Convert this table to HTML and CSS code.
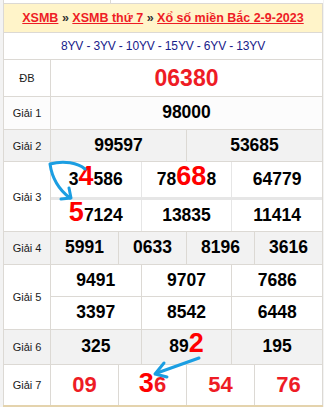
FILE: index.html
```html
<!DOCTYPE html>
<html>
<head>
<meta charset="utf-8">
<link rel="stylesheet" href="styles.css">
</head>
<body>
<div class="page">
  <div class="prev"><span class="prev-line"></span></div>
  <div class="board">
    <div class="head"><span class="head-text"><a class="lnk">XSMB</a> <span class="sep">»</span> <a class="lnk">XSMB thứ 7</a> <span class="sep">»</span> <a class="lnk">Xổ số miền Bắc 2-9-2023</a></span></div>
    <div class="codes">8YV - 3YV - 10YV - 15YV - 6YV - 13YV</div>

    <div class="prize white">
      <div class="label">ĐB</div>
      <div class="data"><div class="line h36 c1"><div class="cell db"><span class="n">06380</span></div></div></div>
    </div>

    <div class="prize light">
      <div class="label">Giải 1</div>
      <div class="data"><div class="line h32 c1"><div class="cell"><span class="n">98000</span></div></div></div>
    </div>

    <div class="prize grey">
      <div class="label">Giải 2</div>
      <div class="data"><div class="line h31 c2"><div class="cell"><span class="n">99597</span></div><div class="cell"><span class="n">53685</span></div></div></div>
    </div>

    <div class="prize white">
      <div class="label">Giải 3</div>
      <div class="data thick">
        <div class="line h35 c3"><div class="cell"><span class="n">3<span class="big">4</span>586</span></div><div class="cell"><span class="n">78<span class="big">68</span>8</span></div><div class="cell"><span class="n">64779</span></div></div>
        <div class="line h31 c3"><div class="cell"><span class="n"><span class="big">5</span>7124</span></div><div class="cell"><span class="n">13835</span></div><div class="cell"><span class="n">11414</span></div></div>
      </div>
    </div>

    <div class="prize grey">
      <div class="label">Giải 4</div>
      <div class="data"><div class="line h32 c4"><div class="cell"><span class="n">5991</span></div><div class="cell"><span class="n">0633</span></div><div class="cell"><span class="n">8196</span></div><div class="cell"><span class="n">3616</span></div></div></div>
    </div>

    <div class="prize white">
      <div class="label">Giải 5</div>
      <div class="data">
        <div class="line h31 c3"><div class="cell"><span class="n">9491</span></div><div class="cell"><span class="n">9707</span></div><div class="cell"><span class="n">7686</span></div></div>
        <div class="line h32 c3"><div class="cell"><span class="n">3397</span></div><div class="cell"><span class="n">8542</span></div><div class="cell"><span class="n">6448</span></div></div>
      </div>
    </div>

    <div class="prize grey">
      <div class="label">Giải 6</div>
      <div class="data"><div class="line h34 c3"><div class="cell"><span class="n">325</span></div><div class="cell"><span class="n">89<span class="big">2</span></span></div><div class="cell"><span class="n">195</span></div></div></div>
    </div>

    <div class="prize white">
      <div class="label">Giải 7</div>
      <div class="data"><div class="line h40 c4"><div class="cell red"><span class="n">09</span></div><div class="cell red"><span class="n"><span class="big">3</span>6</span></div><div class="cell red"><span class="n">54</span></div><div class="cell red"><span class="n">76</span></div></div></div>
    </div>
  </div>

  <svg class="arrows" width="324" height="407" viewBox="0 0 324 407">
    <path d="M85,169 C78,163 64,160 50,164 C52,178 58,189 70,198" />
    <path d="M61,199 L71,198 L69,188" />
    <path d="M199,358 L157,373" />
    <path d="M164,363 L155,374 L167,377" />
  </svg>
</div>
</body>
</html>
```

FILE: styles.css
```css
html, body {
  margin: 0;
  padding: 0;
  background: #ffffff;
}

.page {
  position: relative;
  width: 324px;
  height: 407px;
  overflow: hidden;
  font-family: "Liberation Sans", Arial, sans-serif;
  background: #f3f3f3;
}

.prev {
  height: 3px;
  margin-left: 3px;
  width: 320px;
  background: #ffffff;
  border-left: 1px solid #dcd9d4;
  box-sizing: border-box;
  display: flex;
}

.prev-line {
  display: block;
  margin-left: 106px;
  width: 1px;
  height: 3px;
  background: #dcd9d4;
}

.board {
  margin-left: 3px;
  width: 320px;
  box-sizing: border-box;
  background: #dcd9d4;
  padding: 1px 1px 0 1px;
  border-bottom: 2px solid #e4d3ad;
  display: flex;
  flex-direction: column;
  gap: 1px;
}

.head {
  height: 28px;
  background: #fff4c9;
  display: flex;
  align-items: center;
  justify-content: center;
  font-size: 12.5px;
  font-weight: bold;
}

.head-text {
  white-space: pre;
}

.lnk {
  color: #ee1c25;
  text-decoration: underline;
  text-decoration-color: #ee1c25;
}

.sep {
  color: #333333;
}

.codes {
  height: 26px;
  background: #ffffff;
  display: flex;
  align-items: center;
  justify-content: center;
  font-size: 12px;
  color: #17208a;
  letter-spacing: -0.15px;
}

.prize {
  display: flex;
  gap: 1px;
}

.label {
  width: 46px;
  flex: none;
  display: flex;
  align-items: center;
  justify-content: center;
  font-size: 11px;
  color: #1a1a1a;
}

.data {
  flex: 1;
  display: flex;
  flex-direction: column;
  gap: 1px;
}

.data.thick {
  gap: 3px;
  background: #e6e6e6;
}

.line {
  display: grid;
  gap: 1px;
}

.c1 { grid-template-columns: 1fr; }
.c2 { grid-template-columns: repeat(2, 1fr); }
.c3 { grid-template-columns: repeat(3, 1fr); }
.c4 { grid-template-columns: repeat(4, 1fr); }

.h31 { height: 31px; }
.h32 { height: 32px; }
.h34 { height: 34px; }
.h35 { height: 35px; }
.h36 { height: 36px; }
.h40 { height: 40px; }

.cell {
  display: flex;
  align-items: center;
  justify-content: center;
  font-size: 17.5px;
  font-weight: bold;
  color: #000000;
}

.n {
  line-height: 1;
  white-space: nowrap;
}

.white .label, .white .cell { background: #ffffff; }
.light .label, .light .cell { background: #fcfcfc; }
.grey .label, .grey .cell { background: #f2f2f2; }

.cell.db {
  font-size: 23px;
  color: #ee1c25;
}

.cell.red {
  font-size: 22px;
  color: #ee1c25;
}

.big {
  font-size: 27px;
  line-height: 0;
  color: #ff0000;
}

.arrows {
  position: absolute;
  left: 0;
  top: 0;
  fill: none;
  stroke: #1b9ee2;
  stroke-width: 3;
  stroke-linecap: round;
  stroke-linejoin: round;
}
```
